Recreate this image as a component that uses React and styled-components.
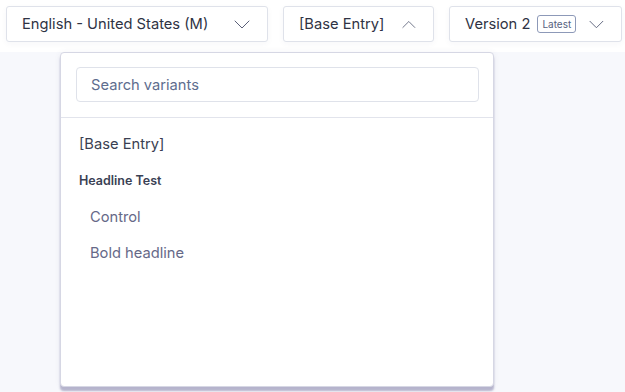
import styled, { createGlobalStyle } from "styled-components";

const GlobalStyle = createGlobalStyle`
    html, body {
        margin: 0;
        padding: 0;
        background: #f7f8fc;
        font-family: Inter, "Noto Sans", sans-serif;
    }
`

const Page = styled.div`
    position: relative;
    width: 625px;
    height: 392px;
    overflow: hidden;
    background: #f7f8fc;
`

const TopBar = styled.div`
    height: 52px;
    background: #ffffff;
    display: flex;
    align-items: flex-start;
    gap: 15px;
    padding: 6px 0 0 6px;
    box-sizing: border-box;
`

const Select = styled.button`
    display: flex;
    align-items: center;
    justify-content: space-between;
    gap: ${({gap}) => gap || 18}px;
    height: 36px;
    width: ${({width}) => width ? `${width}px` : "auto"};
    padding: 0 17px 0 15px;
    box-sizing: border-box;
    background: #ffffff;
    border: 1px solid #dfe2ea;
    border-radius: 3px;
    font-family: inherit;
    font-size: 14.7px;
    color: #2f3344;
    box-shadow: 0 2px 6px rgba(40, 50, 90, 0.04);
`

const Label = styled.span`
    display: flex;
    align-items: center;
    gap: 7px;
    white-space: nowrap;
`

const Badge = styled.span`
    font-size: 10px;
    color: #56617e;
    border: 1px solid #8d99b8;
    border-radius: 3px;
    padding: 2px 4px;
    line-height: 12px;
`

const Chevron = ({up}) => (
    <svg width="16" height="9" viewBox="0 0 16 9" fill="none">
        <polyline
            points={up ? "1,8 8,1 15,8" : "1,1 8,8 15,1"}
            stroke="#5a6078"
            strokeWidth="1"
            strokeLinejoin="round"
            strokeLinecap="round"
        />
    </svg>
)

const Menu = styled.div`
    position: absolute;
    left: 60px;
    top: 52px;
    width: 434px;
    height: 335px;
    box-sizing: border-box;
    background: #ffffff;
    border: 1px solid #d6d7e4;
    border-radius: 4px;
    box-shadow: 0 4px 2px rgba(120, 116, 160, 0.5), 0 0 6px rgba(60, 60, 120, 0.06);
`

const SearchWrap = styled.div`
    padding: 14px 14px 15px 15px;
    border-bottom: 1px solid #e2e4ec;
`

const Search = styled.input`
    width: 100%;
    height: 35px;
    box-sizing: border-box;
    border: 1px solid #dfe2ea;
    border-radius: 4px;
    padding: 1px 14px 0;
    font-family: inherit;
    font-size: 14.7px;
    outline: none;
    &::placeholder {
        color: #5e6d8e;
    }
`

const List = styled.div`
    display: flex;
    flex-direction: column;
    padding-top: 10px;
`

const Item = styled.div`
    font-size: 14.7px;
    line-height: 20px;
    padding: ${({indent}) => indent ? "6px 0 10px 29px" : "6px 0 7px 18px"};
    color: ${({muted}) => muted ? "#666988" : "#3a3f52"};
`

const Group = styled.div`
    font-size: 12.5px;
    font-weight: 600;
    color: #3a4154;
    padding: 12px 0 13px 18px;
`

export default function App() {
    return (
        <Page>
            <GlobalStyle />
            <TopBar>
                <Select width={262}>
                    <Label>English - United States (M)</Label>
                    <Chevron />
                </Select>
                <Select width={151}>
                    <Label>[Base Entry]</Label>
                    <Chevron up />
                </Select>
                <Select width={173} gap={13}>
                    <Label>Version 2 <Badge>Latest</Badge></Label>
                    <Chevron />
                </Select>
            </TopBar>
            <Menu>
                <SearchWrap>
                    <Search placeholder="Search variants" />
                </SearchWrap>
                <List>
                    <Item>[Base Entry]</Item>
                    <Group>Headline Test</Group>
                    <Item indent muted>Control</Item>
                    <Item indent muted>Bold headline</Item>
                </List>
            </Menu>
        </Page>
    )
}
